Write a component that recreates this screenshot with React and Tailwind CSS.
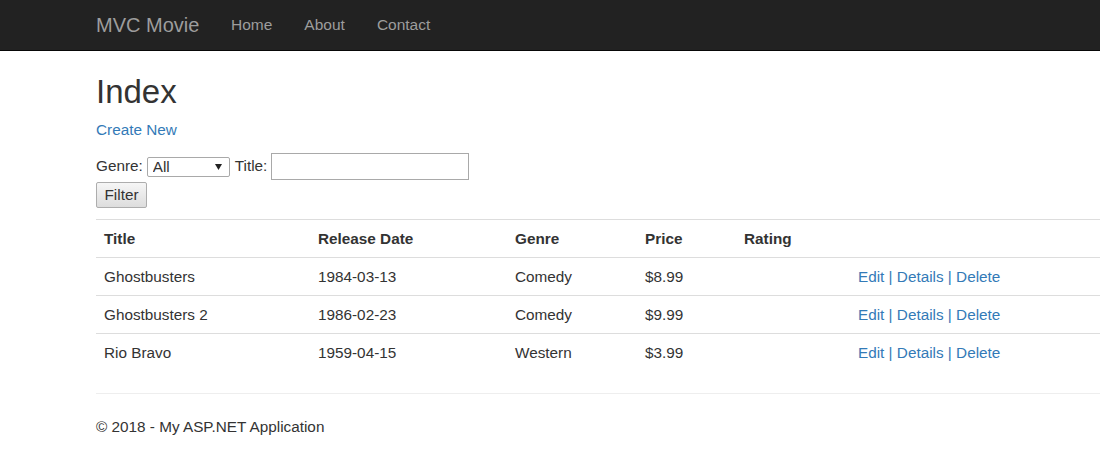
import { useState } from 'react'

const movies = [
  { title: 'Ghostbusters', date: '1984-03-13', genre: 'Comedy', price: '$8.99', rating: '' },
  { title: 'Ghostbusters 2', date: '1986-02-23', genre: 'Comedy', price: '$9.99', rating: '' },
  { title: 'Rio Bravo', date: '1959-04-15', genre: 'Western', price: '$3.99', rating: '' },
]

function Navbar() {
  return (
    <div className="h-[51px] bg-[#222] border-b border-[#080808]">
      <div className="ml-[81px] w-[1170px] px-[15px] flex">
        <a href="#" className="block w-[134px] -ml-[15px] px-[15px] py-[15px] text-[20px] leading-[20px] text-[#9d9d9d]">
          MVC Movie
        </a>
        <ul className="flex">
          {['Home', 'About', 'Contact'].map((item) => (
            <li key={item}>
              <a href="#" className="block px-[16px] py-[15px] text-[15.5px] leading-[20px] text-[#9d9d9d]">
                {item}
              </a>
            </li>
          ))}
        </ul>
      </div>
    </div>
  )
}

function FilterForm() {
  const [genre, setGenre] = useState('')
  const [search, setSearch] = useState('')

  return (
    <form className="mb-[11px]" onSubmit={(e) => e.preventDefault()}>
      <div className="flex items-center h-[32px]">
        <span>Genre:</span>
        <div className="relative ml-[4px] mt-[1px]">
          <select
            value={genre}
            onChange={(e) => setGenre(e.target.value)}
            className="appearance-none w-[83px] h-[20px] border border-[#a9a9a9] rounded-[2px] bg-white pl-[5px] text-[15.3px] leading-[18px] text-[#333] outline-none"
          >
            <option value="">All</option>
            <option value="Comedy">Comedy</option>
            <option value="Western">Western</option>
          </select>
          <svg className="absolute right-[8px] top-[7px] pointer-events-none" width="7" height="6" viewBox="0 0 7 6">
            <path d="M0 0 L7 0 L3.5 6 Z" fill="#222" />
          </svg>
        </div>
        <span className="ml-[5px]">Title:</span>
        <input
          type="text"
          value={search}
          onChange={(e) => setSearch(e.target.value)}
          className="ml-[4px] w-[198px] h-[27px] border border-[#a9a9a9] px-[2px] outline-none"
        />
      </div>
      <button
        type="submit"
        className="block w-[51px] h-[26px] border border-[#adadad] rounded-[2px] bg-gradient-to-b from-[#f6f6f6] to-[#dddddd] text-[15.3px] leading-[20px] text-[#333]"
      >
        Filter
      </button>
    </form>
  )
}

function MovieTable() {
  const cell = 'px-[8px] py-[8px] leading-[21px] border-t border-[#ddd] text-left align-top'
  return (
    <table className="w-full border-collapse mb-[22px]">
      <tbody>
        <tr>
          <th className={`${cell} w-[214px] font-bold`}>Title</th>
          <th className={`${cell} w-[197px] font-bold`}>Release Date</th>
          <th className={`${cell} w-[130px] font-bold`}>Genre</th>
          <th className={`${cell} w-[99px] font-bold`}>Price</th>
          <th className={`${cell} w-[114px] font-bold`}>Rating</th>
          <th className={cell}></th>
        </tr>
        {movies.map((m) => (
          <tr key={m.title}>
            <td className={cell}>{m.title}</td>
            <td className={cell}>{m.date}</td>
            <td className={cell}>{m.genre}</td>
            <td className={cell}>{m.price}</td>
            <td className={cell}>{m.rating}</td>
            <td className={`${cell} text-[#337ab7]`}>
              <a href="#">Edit</a> | <a href="#">Details</a> | <a href="#">Delete</a>
            </td>
          </tr>
        ))}
      </tbody>
    </table>
  )
}

export default function App() {
  return (
    <div className="w-full overflow-hidden bg-white text-[15.3px] leading-[20px] text-[#333] font-['Liberation_Sans',Arial,sans-serif] min-h-[450px]">
      <Navbar />
      <div className="ml-[81px] w-[1170px] px-[15px]">
        <h2 className="mt-[19px] mb-[6px] text-[33px] leading-[44px] font-normal">Index</h2>
        <p className="mb-[10px]">
          <a href="#" className="text-[#337ab7]">Create New</a>
        </p>
        <FilterForm />
        <MovieTable />
        <hr className="border-0 border-t border-[#eee] mb-[23px]" />
        <footer>
          <p>© 2018 - My ASP.NET Application</p>
        </footer>
      </div>
    </div>
  )
}
